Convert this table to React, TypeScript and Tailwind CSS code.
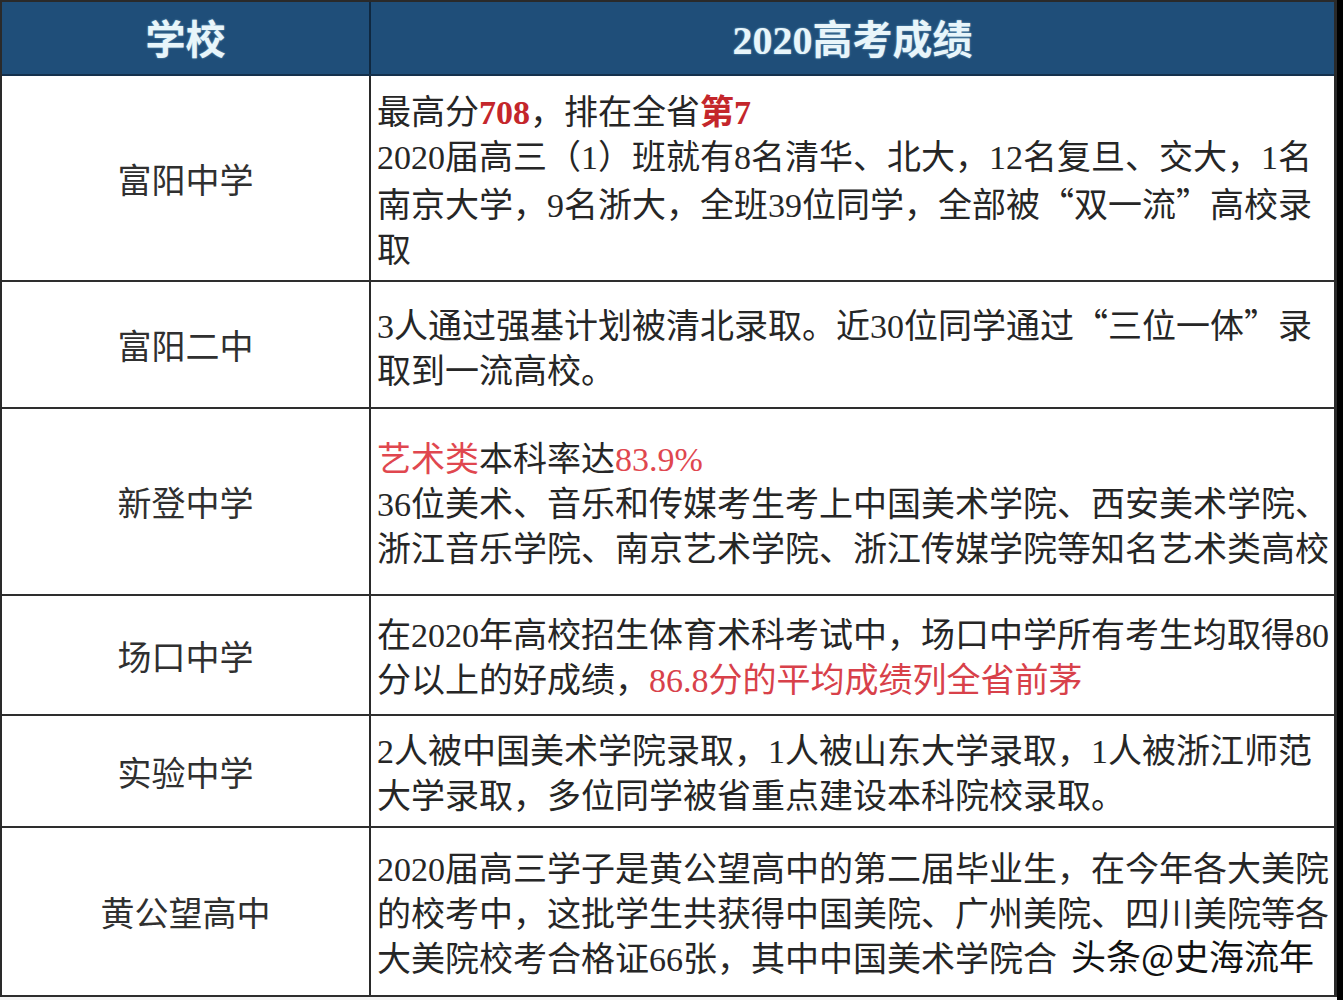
import type { ReactNode } from "react";

const font = "font-['Liberation_Serif','Noto_Sans_CJK_SC',serif]";

function Q({ children }: { children: ReactNode }) {
  // 全角引号
  return <span className="font-['Noto_Sans_CJK_SC',sans-serif]">{children}</span>;
}

function Red({ children }: { children: ReactNode }) {
  return <span className="font-bold text-[#c4262b]">{children}</span>;
}

function Pink({ children }: { children: ReactNode }) {
  return <span className="text-[#e0474f]">{children}</span>;
}

type Row = { name: string; h: string; lines: ReactNode[]; mark?: boolean };

const rows: Row[] = [
  {
    name: "富阳中学",
    h: "h-[206px]",
    lines: [
      <>
        最高分<Red>708</Red>，排在全省<Red>第7</Red>
      </>,
      "2020届高三（1）班就有8名清华、北大，12名复旦、交大，1名",
      <>
        南京大学，9名浙大，全班39位同学，全部被<Q>“</Q>双一流<Q>”</Q>高校录
      </>,
      "取",
    ],
  },
  {
    name: "富阳二中",
    h: "h-[127px]",
    lines: [
      <>
        3人通过强基计划被清北录取。近30位同学通过<Q>“</Q>三位一体<Q>”</Q>录
      </>,
      "取到一流高校。",
    ],
  },
  {
    name: "新登中学",
    h: "h-[187px]",
    lines: [
      <>
        <Pink>艺术类</Pink>本科率达<Pink>83.9%</Pink>
      </>,
      "36位美术、音乐和传媒考生考上中国美术学院、西安美术学院、",
      "浙江音乐学院、南京艺术学院、浙江传媒学院等知名艺术类高校",
    ],
  },
  {
    name: "场口中学",
    h: "h-[120px]",
    lines: [
      "在2020年高校招生体育术科考试中，场口中学所有考生均取得80",
      <>
        分以上的好成绩，<span className="text-[#d8414a]">86.8分的平均成绩列全省前茅</span>
      </>,
    ],
  },
  {
    name: "实验中学",
    h: "h-[112px]",
    lines: [
      "2人被中国美术学院录取，1人被山东大学录取，1人被浙江师范",
      "大学录取，多位同学被省重点建设本科院校录取。",
    ],
  },
  {
    name: "黄公望高中",
    h: "h-[169px]",
    mark: true,
    lines: [
      "2020届高三学子是黄公望高中的第二届毕业生，在今年各大美院",
      "的校考中，这批学生共获得中国美院、广州美院、四川美院等各",
      "大美院校考合格证66张，其中中国美术学院合",
    ],
  },
];

export default function App() {
  return (
    <div className={`flex w-[1343px] h-[1000px] bg-[#f4f4f4] ${font}`}>
      <div className="flex flex-col w-[1337px] h-[1000px]">
        <div className="flex flex-col border-l-2 border-t-2 border-r-[3px] border-[#2a2a2a] bg-white">
          <div className="flex h-[74px] bg-[#1f4e79] border-b-2 border-[#14304c] text-[40px] font-bold text-[#e8f5fa] [text-shadow:0_0_2px_rgba(170,220,240,0.7)]">
            <div className="w-[369px] shrink-0 flex items-center justify-center border-r-2 border-[#0f2840] pt-[6px]">
              学校
            </div>
            <div className="flex-1 flex items-center justify-center pt-[6px]">2020高考成绩</div>
          </div>
          {rows.map((r) => (
            <div key={r.name} className={`flex ${r.h} border-b-2 border-[#2e2e2e]`}>
              <div className="w-[369px] shrink-0 flex items-center justify-center border-r-2 border-[#2a2a2a] text-[34px] text-[#303030] pt-[6px]">
                {r.name}
              </div>
              <div className="relative flex-1 flex flex-col justify-center pl-[6px] pt-[6px] text-[34px] leading-[45px] text-[#262626] overflow-hidden">
                {r.lines.map((l, i) => (
                  <div key={i} className="whitespace-nowrap">
                    {l}
                  </div>
                ))}
                {r.mark && (
                  <div className="absolute left-[700px] top-[107px] font-['Noto_Sans_CJK_SC',sans-serif] text-[35px] leading-[40px] text-[#111] [text-shadow:0_0_3px_#fff,0_0_3px_#fff,0_0_4px_#fff]">
                    头条@史海流年
                  </div>
                )}
              </div>
            </div>
          ))}
        </div>
      </div>
      <div className="w-[6px] h-[1000px] bg-black" />
    </div>
  );
}
